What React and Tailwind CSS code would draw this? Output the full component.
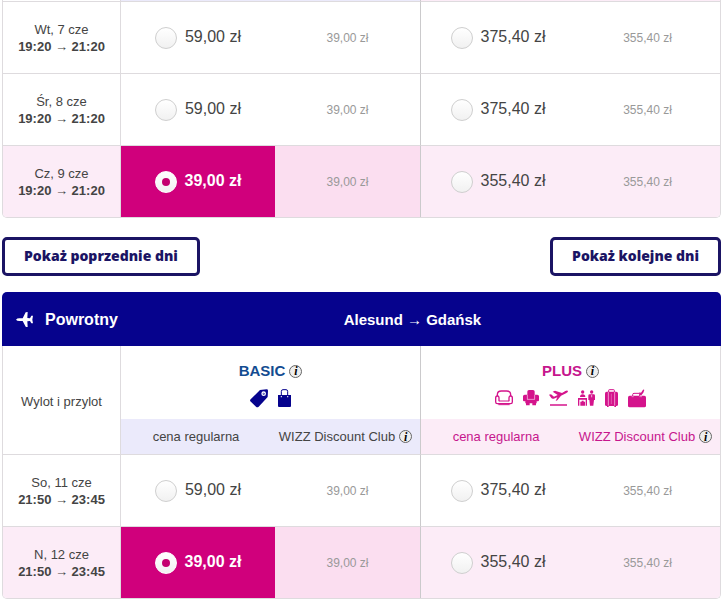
import React from "react";

const outbound = [
  { date: "Wt, 7 cze", from: "19:20", to: "21:20", basic: ["59,00 zł", "39,00 zł"], plus: ["375,40 zł", "355,40 zł"] },
  { date: "Śr, 8 cze", from: "19:20", to: "21:20", basic: ["59,00 zł", "39,00 zł"], plus: ["375,40 zł", "355,40 zł"] },
  { date: "Cz, 9 cze", from: "19:20", to: "21:20", basic: ["39,00 zł", "39,00 zł"], plus: ["355,40 zł", "355,40 zł"], selected: true },
];

const inbound = [
  { date: "So, 11 cze", from: "21:50", to: "23:45", basic: ["59,00 zł", "39,00 zł"], plus: ["375,40 zł", "355,40 zł"] },
  { date: "N, 12 cze", from: "21:50", to: "23:45", basic: ["39,00 zł", "39,00 zł"], plus: ["355,40 zł", "355,40 zł"], selected: true },
];

function Icon({ width, box, children }) {
  return (
    <svg className={`h-[19px] shrink-0 ${width}`} viewBox={box} fill="currentColor" aria-hidden="true">
      {children}
    </svg>
  );
}

const TagIcon = () => (
  <Icon width="w-[18px]" box="0 0 54 57">
    <path d="M30 3 L50 1 Q54 1 54 5 L53 24 L26 53 Q22 57 18 53 L1 37 Q-1 34 2 31 Z" />
    <circle cx="41" cy="14" r="5" fill="none" stroke="#fff" strokeWidth="4" />
    <circle cx="41" cy="14" r="2" fill="#8f9bd8" />
  </Icon>
);

const ShopperIcon = () => (
  <Icon width="w-[13px]" box="0 0 39 57">
    <path d="M10 22 V7 Q10 2 15 2 H24 Q29 2 29 7 V22" fill="none" stroke="currentColor" strokeWidth="3" />
    <path d="M0 18 H39 V51 Q39 54 36 54 H3 Q0 54 0 51 Z" />
    <circle cx="10" cy="23" r="2" fill="#fff" />
    <circle cx="29" cy="23" r="2" fill="#fff" />
  </Icon>
);

const SofaIcon = () => (
  <Icon width="w-[18px]" box="0 0 54 57">
    <g fill="none" stroke="currentColor" strokeWidth="4">
      <path d="M7 21 V17 Q7 6 19 6 H35 Q47 6 47 17 V21" />
      <path d="M12 37 V26 Q12 21 7 21 Q2 21 2 27 V39 Q2 44 7 44 H47 Q52 44 52 39 V27 Q52 21 47 21 Q42 21 42 26 V37" />
      <path d="M12 36 H42" strokeWidth="3" />
      <path d="M10 47 H44" strokeWidth="3" />
    </g>
  </Icon>
);

const ArmchairIcon = () => (
  <Icon width="w-4" box="0 0 48 57">
    <path d="M13 8 Q13 3 18 3 H30 Q35 3 35 8 V32 H13 Z" />
    <path d="M0 22 Q0 17 5 17 H13 V32 H35 V17 H43 Q48 17 48 22 V34 Q48 37 45 37 H41 V43 H7 V37 H3 Q0 37 0 34 Z" />
    <path d="M9 42 H20 V49 H9 Z M28 42 H39 V49 H28 Z" />
    <path d="M13 18 V31 H35 V18" fill="none" stroke="#f3b5dc" strokeWidth="2" />
  </Icon>
);

const TakeoffIcon = () => (
  <Icon width="w-[19px]" box="0 0 57 57">
    <path d="M0 17 L6 16 L15 23 L26 18 L11 8 L18 5 L39 12 L49 6 Q56 3 57 7 Q57 10 51 13 L36 20 L25 34 L20 36 L25 25 L14 29 Q9 30 7 27 Z" />
    <path d="M3 46 H54 V50 H3 Z" />
  </Icon>
);

const CheckInIcon = () => (
  <Icon width="w-[17px]" box="0 0 51 57">
    <circle cx="14" cy="9" r="5" />
    <path d="M6 24 Q6 16 14 16 Q22 16 22 24 Z" />
    <path d="M0 27 H27 V32 H4 V50 H0 Z M23 32 H27 V50 H23 Z" />
    <path d="M7 38 H11 V35 H17 V38 H21 V50 H7 Z" />
    <circle cx="41" cy="9" r="5" />
    <path d="M35 16 H47 Q51 16 51 20 V33 H48 L46 50 H36 L34 33 H31 V20 Q31 16 35 16 Z" />
    <path d="M41 18 V25" stroke="#fff" strokeWidth="2" />
  </Icon>
);

const SuitcaseIcon = () => (
  <Icon width="w-[13px]" box="0 0 39 57">
    <path d="M11 10 V4 Q11 2 13 2 H26 Q28 2 28 4 V10" fill="none" stroke="currentColor" strokeWidth="3" />
    <path d="M5 8 H34 Q39 8 39 13 V47 Q39 51 34 51 H5 Q0 51 0 47 V13 Q0 8 5 8 Z" />
    <path d="M10 9 V50 M29 9 V50" stroke="#fbd9ee" strokeWidth="2" />
    <path d="M19 14 V45" stroke="#e679bd" strokeWidth="2" />
    <path d="M6 51 H11 V54 H6 Z M28 51 H33 V54 H28 Z" />
  </Icon>
);

const CabinBagIcon = () => (
  <Icon width="w-[18px]" box="0 0 54 57">
    <path d="M14 22 V17 Q14 13 18 13 H35 V22" fill="none" stroke="currentColor" strokeWidth="3" />
    <path d="M36 18 L34 10 L39 11 L45 2 Q48 0 49 3 L46 11 L40 19 Z" />
    <path d="M5 20 H49 Q54 20 54 25 V50 Q54 55 49 55 H5 Q0 55 0 50 V25 Q0 20 5 20 Z" />
    <path d="M11 23 H17 M34 23 H42" stroke="#f3b5dc" strokeWidth="2" />
  </Icon>
);

const PlaneIcon = () => (
  <svg className="h-[15px] w-[17px] shrink-0" viewBox="0 0 51 45" fill="#fff" aria-hidden="true">
    <path d="M0 23 Q3 19 10 19 H20 L29 1 Q30 0 35 0 L34 18 L42 19 L46 11 H51 L49 23 L51 34 H46 L42 27 L34 28 L35 45 Q30 45 29 44 L20 27 H10 Q3 27 0 23 Z" />
  </svg>
);

function Info({ label }) {
  return (
    <button
      type="button"
      aria-label={label}
      className="inline-flex size-[13px] shrink-0 items-center justify-center rounded-full border border-[#666] bg-[#eee] font-['Liberation_Serif',serif] text-[12px] leading-none font-bold text-black italic"
    >
      i
    </button>
  );
}

function Fare({ name, price, active, label }) {
  return (
    <label className={`flex items-center justify-center gap-2 text-base leading-5 ${active ? "font-bold text-white" : "text-[#444]"}`}>
      <input
        type="radio"
        name={name}
        defaultChecked={active}
        aria-label={`${label} ${price}`}
        className="grid size-[22px] shrink-0 appearance-none place-items-center rounded-full border border-[#cfcfcf] bg-linear-to-b from-white to-[#f1f1f1] before:size-2 before:rounded-full checked:border-white checked:before:bg-[#c4006f]"
      />
      <span className="pb-0.5">{price}</span>
    </label>
  );
}

function Columns() {
  return (
    <colgroup>
      <col className="w-[118px]" />
      <col className="w-[154px]" />
      <col className="w-[146px]" />
      <col className="w-[154px]" />
      <col className="w-[145px]" />
    </colgroup>
  );
}

function FlightRow({ flight, name }) {
  const { selected } = flight;
  const tint = selected ? "bg-[#fcecf7]" : "bg-white";
  return (
    <tr className="h-[72px]">
      <th scope="row" className={`border-t border-r border-[#dedbde] text-[13px] leading-[17px] font-normal ${tint}`}>
        {flight.date}
        <div className="font-bold">
          {flight.from} → {flight.to}
        </div>
      </th>
      <td className={`border-t border-[#dedbde] ${selected ? "bg-[#d0007c]" : tint}`}>
        <Fare name={name} price={flight.basic[0]} active={selected} label="BASIC" />
      </td>
      <td className={`border-t border-r border-t-[#dedbde] border-r-[#cbcacc] text-center text-xs text-[#999] ${selected ? "bg-[#fbdef0]" : tint}`}>
        {flight.basic[1]}
      </td>
      <td className={`border-t border-[#dedbde] ${tint}`}>
        <Fare name={name} price={flight.plus[0]} label="PLUS" />
      </td>
      <td className={`border-t border-[#dedbde] text-center text-xs text-[#999] ${tint}`}>{flight.plus[1]}</td>
    </tr>
  );
}

function DaysButton({ children }) {
  return (
    <button
      type="button"
      className="rounded-[5px] border-[3px] border-[#1b1464] bg-white px-[19px] pt-1.5 pb-2 font-['Open_Sans',sans-serif] text-sm leading-[19px] font-extrabold text-[#1b1464]"
    >
      {children}
    </button>
  );
}

export default function App() {
  return (
    <main className="bg-white pr-[3px] pb-[5px] pl-0.5 font-['Liberation_Sans',Arial,sans-serif] text-[#444]">
      <section className="overflow-hidden rounded-b-[5px] border border-t-0 border-[#dedbde]">
        <table className="w-full table-fixed border-separate border-spacing-0">
          <Columns />
          <thead>
            <tr className="h-px">
              <td className="border-r border-[#dedbde] p-0" />
              <td colSpan={2} className="border-r border-[#cbcacc] bg-[#ebeafb] p-0" />
              <td colSpan={2} className="bg-[#fcecf7] p-0" />
            </tr>
          </thead>
          <tbody>
            {outbound.map((flight) => (
              <FlightRow key={flight.date} flight={flight} name="outbound" />
            ))}
          </tbody>
        </table>
      </section>

      <nav className="mt-[19px] mb-4 flex justify-between">
        <DaysButton>Pokaż poprzednie dni</DaysButton>
        <DaysButton>Pokaż kolejne dni</DaysButton>
      </nav>

      <section>
        <header className="flex h-[54px] items-center rounded-t-[5px] bg-[#06038d] px-3.5 font-bold text-white">
          <PlaneIcon />
          <h2 className="ml-3 pt-0.5 text-base">Powrotny</h2>
          <p className="flex-1 pt-0.5 text-center text-[15px]">Alesund → Gdańsk</p>
        </header>
        <div className="overflow-hidden rounded-b-[5px] border border-t-0 border-[#dedbde]">
          <table className="w-full table-fixed border-separate border-spacing-0">
            <Columns />
            <thead className="text-[13px]">
              <tr className="h-[73px]">
                <th rowSpan={2} scope="col" className="border-r border-[#dedbde] pt-1 font-normal">
                  Wylot i przylot
                </th>
                <th colSpan={2} scope="colgroup" className="border-r border-[#cbcacc] px-0 pt-[15px] pb-[11px]">
                  <div className="flex items-center justify-center gap-1 text-[15px] leading-5 text-[#134c91]">
                    BASIC <Info label="Informacje o BASIC" />
                  </div>
                  <div className="mt-2 flex justify-center gap-2.5 text-[#06038d]">
                    <TagIcon />
                    <ShopperIcon />
                  </div>
                </th>
                <th colSpan={2} scope="colgroup" className="px-0 pt-[15px] pb-[11px]">
                  <div className="flex items-center justify-center gap-1 text-[15px] leading-5 text-[#c6168d]">
                    PLUS <Info label="Informacje o PLUS" />
                  </div>
                  <div className="mt-2 flex justify-center gap-2.5 text-[#d4148c]">
                    <SofaIcon />
                    <ArmchairIcon />
                    <TakeoffIcon />
                    <CheckInIcon />
                    <SuitcaseIcon />
                    <CabinBagIcon />
                  </div>
                </th>
              </tr>
              <tr className="h-[35px]">
                <th scope="col" className="bg-[#ebeafb] py-0 pr-1 pl-0 font-normal">cena regularna</th>
                <th scope="col" className="border-r border-[#cbcacc] bg-[#ebeafb] py-0 pr-1 pl-0 font-normal">
                  <div className="flex items-center justify-center gap-1 whitespace-nowrap">
                    WIZZ Discount Club <Info label="Informacje o WIZZ Discount Club" />
                  </div>
                </th>
                <th scope="col" className="bg-[#fcecf7] py-0 pr-1 pl-0 font-normal text-[#c6168d]">cena regularna</th>
                <th scope="col" className="bg-[#fcecf7] py-0 pr-1 pl-0 font-normal text-[#c6168d]">
                  <div className="flex items-center justify-center gap-1 whitespace-nowrap">
                    WIZZ Discount Club <Info label="Informacje o WIZZ Discount Club" />
                  </div>
                </th>
              </tr>
            </thead>
            <tbody>
              {inbound.map((flight) => (
                <FlightRow key={flight.date} flight={flight} name="return" />
              ))}
            </tbody>
          </table>
        </div>
      </section>
    </main>
  );
}
